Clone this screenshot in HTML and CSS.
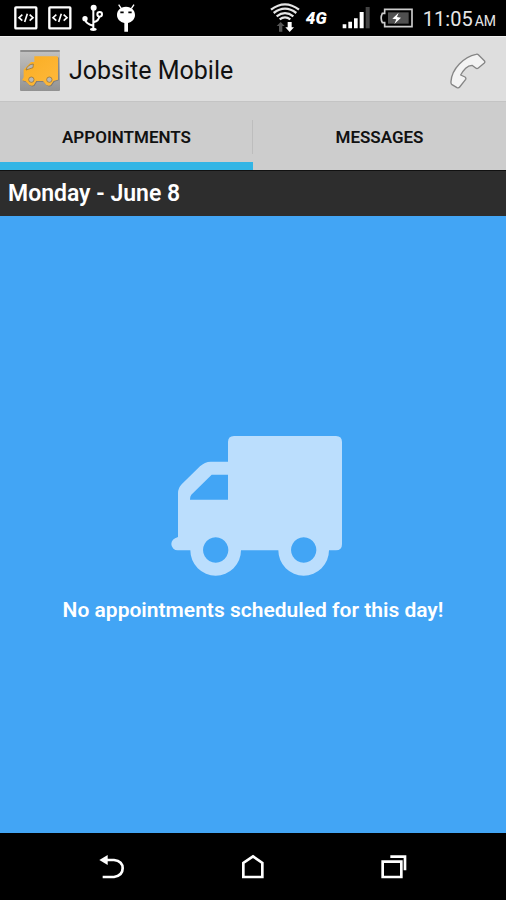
FILE: index.html
```html
<!DOCTYPE html>
<html lang="en">
<head>
    <meta charset="UTF-8">
    <meta name="viewport" content="width=device-width, initial-scale=1.0">
    <title>Jobsite Mobile</title>
    <link rel="stylesheet" href="styles.css">
</head>
<body>
    <div class="status-bar">
        <div class="status-group">
            <svg width="24" height="24" viewBox="0 0 72 72" fill="none" stroke="#fff">
                <rect x="4" y="4" width="63" height="63" rx="2" stroke-width="7"/>
                <path d="M25 26 15 35l10 9M47 26l10 9-10 9M40 23l-8 25" stroke-width="5"/>
            </svg>
            <svg width="24" height="24" viewBox="0 0 72 72" fill="none" stroke="#fff">
                <rect x="4" y="4" width="63" height="63" rx="2" stroke-width="7"/>
                <path d="M25 26 15 35l10 9M47 26l10 9-10 9M40 23l-8 25" stroke-width="5"/>
            </svg>
            <svg width="23" height="28" viewBox="248 14 69 84" fill="none" stroke="#fff" stroke-width="6">
                <path d="M282 26v64M257 60q2 13 25 19M300 50q0 14-18 19"/>
                <circle cx="283" cy="25" r="9" fill="#fff" stroke="none"/>
                <circle cx="257" cy="58" r="8" fill="#fff" stroke="none"/>
                <circle cx="301" cy="45" r="7"/>
                <ellipse cx="282" cy="90" rx="10" ry="5" fill="#fff" stroke="none"/>
            </svg>
            <svg width="22" height="28" viewBox="348 14 66 84" fill="#fff">
                <path d="m359 16 8 12M405 16l-8 12" stroke="#fff" stroke-width="4"/>
                <path d="M381 22c17 0 27 11 27 25 0 12-9 21-21 24v26h-11V71c-13-3-22-12-22-24 0-14 10-25 27-25z"/>
                <path d="M364 39h10M388 39h10" stroke="#000" stroke-width="5"/>
            </svg>
        </div>
        <div class="status-group">
            <svg width="30" height="30" viewBox="28 10 90 90" fill="none" stroke="#e6e6e6" stroke-width="7">
                <path d="M31 30q42-32 84 0M39 40q34-26 68 0M48 50q25-19 50 0M57 59q16-12 32 0"/>
                <path d="m60 67 12 12h-7v17H55V79h-7z" fill="#555" stroke="none"/>
                <path d="m87 97 13-14h-7V67H81v16h-7z" fill="#fff" stroke="none"/>
            </svg>
            <span class="network">4G</span>
            <svg class="signal" width="28" height="24" viewBox="244 24 84 72" fill="#fff">
                <path d="M246 79h11v12h-11zM263 71h11v20h-11zM280 61h11v30h-11zM297 42h12v49h-12z"/>
                <path d="M315 27h12v64h-12z" fill="#444"/>
            </svg>
            <svg width="33" height="20" viewBox="354 25 99 60" fill="none">
                <path d="M368 29h82v52h-82V69h-7q-7-14 0-28h7z" stroke="#ccc" stroke-width="5"/>
                <path d="M378 38h62v34h-62z" fill="#505050"/>
                <path d="m410 39-19 18 12 2-6 14 20-19-12-2z" fill="#fff"/>
            </svg>
            <div class="clock">
                <span>11:05</span>
                <span class="meridiem">AM</span>
            </div>
        </div>
    </div>

    <header class="app-bar">
        <svg width="40" height="41" viewBox="0 0 120 123">
            <defs>
                <linearGradient id="tile" x2="0" y2="1">
                    <stop offset="0" stop-color="#c2c2c2"/>
                    <stop offset="1" stop-color="#929292"/>
                </linearGradient>
                <linearGradient id="van" x2="1" y2="1">
                    <stop offset="0" stop-color="#f9ad22"/>
                    <stop offset="1" stop-color="#ffb93c"/>
                </linearGradient>
            </defs>
            <rect width="120" height="123" rx="3" fill="url(#tile)"/>
            <path d="M1 3h118" stroke="#7c7c7c" stroke-width="4"/>
            <path d="M43 19h67q4 0 4 4v66l-13 4-9 13q-6 3-13-1L69 93H49l-8 13q-6 3-13-1L17 94l-11-3 5-9V59l22-23h10z" fill="#777" transform="translate(2 2)"/>
            <path d="M43 19h67q4 0 4 4v66l-13 4-9 13q-6 3-13-1L69 93H49l-8 13q-6 3-13-1L17 94l-11-3 5-9V59l22-23h10z" fill="url(#van)"/>
            <path d="M18 60q5-17 22-18l-1 11z" fill="#b8b8b8" stroke="#8a6a30" stroke-width="2"/>
            <circle cx="34" cy="89" r="8" fill="#b8b8b8" stroke="#8a6a30" stroke-width="2"/>
            <circle cx="88" cy="89" r="8" fill="#b8b8b8" stroke="#8a6a30" stroke-width="2"/>
        </svg>
        <h1>Jobsite Mobile</h1>
        <button class="call-button" aria-label="Call">
            <svg width="36" height="36" viewBox="60 44 108 108">
                <path d="M138 48q4-2 7 1l18 18q3 4 0 7l-18 15q-4 3-8 0l-11-8q-10 0-19 9t-15 20l13 6q4 3 2 7l-18 23q-3 4-8 2l-15-9q-4-3-3-10Q65 101 88 77t50-29z" fill="#f3f3f3" stroke="#858585" stroke-width="4" stroke-linejoin="round"/>
            </svg>
        </button>
    </header>

    <nav class="tabs">
        <button class="tab active">APPOINTMENTS</button>
        <button class="tab">MESSAGES</button>
    </nav>

    <h2 class="date-bar">Monday - June 8</h2>

    <main class="empty-state">
        <svg width="171" height="140" viewBox="33 33 513 420">
            <path fill="#bbdefd" fill-rule="evenodd" d="M222 33h306q18 0 18 18v307q0 18-18 18h-21a76 76 0 0 1-152 0H243a76 76 0 0 1-152 0H53a19 19 0 0 1-19-19q0-15 20-21V205q0-16 11-27l55-54q14-14 32-14h52V51q0-18 18-18zM155 149l-61 60q-4 4-4 15h114v-75zM167 337a38 38 0 1 0 .1 0zM431 337a38 38 0 1 0 .1 0z"/>
        </svg>
        <p>No appointments scheduled for this day!</p>
    </main>

    <footer class="nav-bar">
        <button aria-label="Back">
            <svg width="26" height="26" viewBox="62 101 78 78" fill="none" stroke="#fff" stroke-width="8">
                <path d="M80 119h27q26 3 26 25t-26 26H73"/>
                <path d="m63 119 25-15v30z" fill="#fff" stroke="none"/>
            </svg>
        </button>
        <button aria-label="Home">
            <svg width="26" height="26" viewBox="482 101 78 78" fill="none" stroke="#fff" stroke-width="8">
                <path d="M492 170v-42l29-20 28 20v42z"/>
            </svg>
        </button>
        <button aria-label="Recent apps">
            <svg width="26" height="26" viewBox="904 101 78 78" fill="none" stroke="#fff" stroke-width="8">
                <path d="M909 124h56v46h-56zM932 109h44v41"/>
            </svg>
        </button>
    </footer>
</body>
</html>
```

FILE: styles.css
```css
* {
    box-sizing: border-box;
}
body {
    margin: 0;
    min-height: 100vh;
    display: flex;
    flex-direction: column;
    font-family: Roboto, sans-serif;
    background: #000;
}
h1, h2, p {
    margin: 0;
}
button {
    padding: 0;
    border: none;
    background: none;
    font-family: inherit;
    cursor: pointer;
}
svg {
    display: block;
    flex-shrink: 0;
}
.status-bar {
    height: 36px;
    padding: 0 10px 0 14px;
    display: flex;
    align-items: center;
    justify-content: space-between;
    color: #e6e6e6;
}
.status-group {
    display: flex;
    align-items: center;
    gap: 10px;
}
.network {
    margin-left: -4px;
    width: 22px;
    color: #fff;
    font-size: 17px;
    font-style: italic;
    font-weight: 900;
}
.signal {
    margin-left: 4px;
}
.clock {
    display: flex;
    align-items: baseline;
    gap: 2px;
    padding-top: 2px;
    font-size: 20px;
}
.meridiem {
    font-size: 14px;
}
.app-bar {
    height: 65px;
    padding: 3px 20px 0;
    display: flex;
    align-items: center;
    background: #dedede;
    border-top: 1px solid #efefef;
}
.app-bar h1 {
    margin-left: 9px;
    font-size: 25px;
    font-weight: 400;
    color: #111;
}
.call-button {
    margin-left: auto;
}
.tabs {
    height: 70px;
    display: flex;
    background: #cdcdcd;
    border-top: 1px solid #c4c4c4;
    border-bottom: 1px solid #111;
}
.tab {
    flex: 1;
    padding-top: 10px;
    border-bottom: 8px solid transparent;
    font-size: 17px;
    font-weight: 600;
    color: #111;
}
.tab.active {
    border-bottom-color: #33b5e5;
    background: linear-gradient(#bdbdbd, #bdbdbd) right 18px / 1px 34px no-repeat;
}
.date-bar {
    height: 45px;
    padding: 0 8px;
    line-height: 46px;
    font-size: 23px;
    font-weight: 600;
    color: #fff;
    background: #2d2d2d;
}
.empty-state {
    flex: 1;
    padding-top: 10px;
    display: flex;
    flex-direction: column;
    align-items: center;
    justify-content: center;
    gap: 20px;
    background: #42a5f5;
}
.empty-state svg {
    margin-left: 7px;
}
.empty-state p {
    font-size: 21px;
    line-height: 28px;
    font-weight: 600;
    color: #fff;
}
.nav-bar {
    height: 67px;
    padding: 0 42px;
    display: flex;
    align-items: center;
}
.nav-bar button {
    flex: 1;
    display: flex;
    justify-content: center;
}
```
